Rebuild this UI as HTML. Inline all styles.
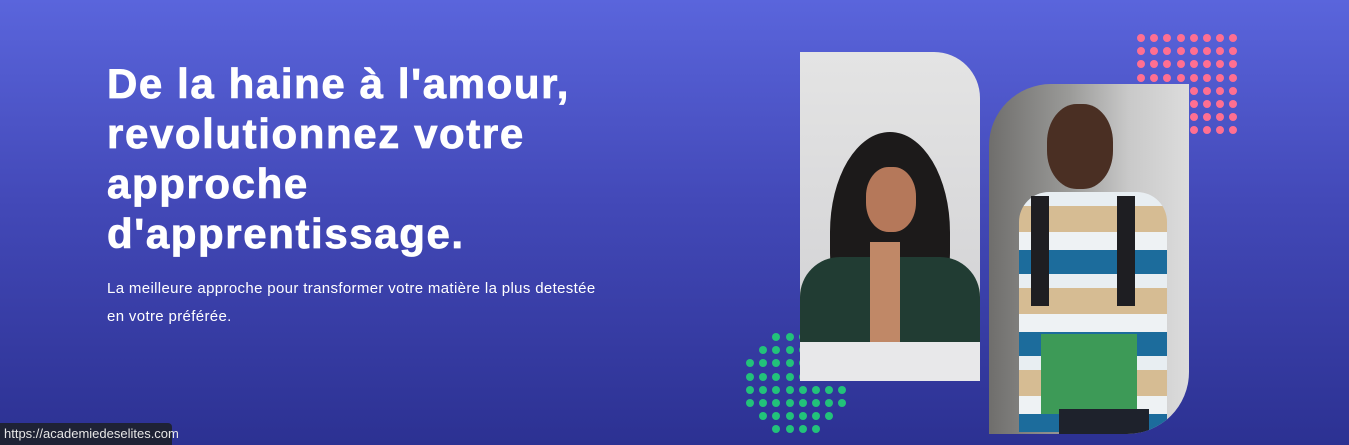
<!DOCTYPE html>
<html><head><meta charset="utf-8"><style>
*{margin:0;padding:0;box-sizing:border-box}
body{width:1349px;height:445px;overflow:hidden;background:linear-gradient(180deg,#5a65dc 0%,#4349b8 45%,#2c3192 100%);font-family:"Liberation Sans",sans-serif;position:relative}
h1{position:absolute;left:107px;top:59px;color:#fff;font-size:42px;font-weight:bold;line-height:50px;letter-spacing:1.6px;-webkit-text-stroke:0.8px #fff}
p{position:absolute;left:107px;top:275px;color:#fff;font-size:15px;line-height:28px;letter-spacing:0.35px}
.dot{position:absolute;width:8px;height:8px;border-radius:50%}
.ph{position:absolute;overflow:hidden}
.status{position:absolute;left:0;top:423px;width:172px;height:22px;background:#1e2235;color:#e6e6e6;font-size:13px;line-height:22px;padding-left:4px;border-top-right-radius:4px}
</style></head><body>
<h1>De la haine à l'amour,<br>revolutionnez votre<br>approche<br>d'apprentissage.</h1>
<p>La meilleure approche pour transformer votre matière la plus detestée<br>en votre préférée.</p>
<div id="dots"></div>
<div class="ph" style="left:800px;top:52px;width:180px;height:329px;border-top-right-radius:46px;background:linear-gradient(180deg,#e4e4e4,#cfcfd2)">
 <div style="position:absolute;left:30px;top:80px;width:120px;height:200px;border-radius:50% 50% 40% 40%;background:#1c1a1a"></div>
 <div style="position:absolute;left:66px;top:115px;width:50px;height:65px;border-radius:45%;background:#b5785a"></div>
 <div style="position:absolute;left:0;top:205px;width:180px;height:130px;border-radius:40px 40px 0 0;background:#213c33"></div>
 <div style="position:absolute;left:70px;top:190px;width:30px;height:100px;background:#c08867"></div>
 <div style="position:absolute;left:0;top:290px;width:180px;height:40px;background:#e8e8ea"></div>
</div>
<div class="ph" style="left:989px;top:84px;width:200px;height:350px;border-top-left-radius:62px;border-bottom-right-radius:62px;background:linear-gradient(90deg,#6f6e6c,#9a9a98 40%,#c9c9c9 70%,#dcdcdc)">
 <div style="position:absolute;left:58px;top:20px;width:66px;height:85px;border-radius:45%;background:#4a2f23"></div>
 <div style="position:absolute;left:30px;top:108px;width:148px;height:240px;border-radius:30px 30px 0 0;background:repeating-linear-gradient(180deg,#e8eef2 0,#e8eef2 14px,#d6bc93 14px,#d6bc93 40px,#eef2f4 40px,#eef2f4 58px,#1c6c9c 58px,#1c6c9c 82px)"></div>
 <div style="position:absolute;left:42px;top:112px;width:18px;height:110px;background:#1e1e22"></div>
 <div style="position:absolute;left:128px;top:112px;width:18px;height:110px;background:#1e1e22"></div>
 <div style="position:absolute;left:52px;top:250px;width:96px;height:80px;background:#3d9a57"></div>
 <div style="position:absolute;left:70px;top:325px;width:90px;height:25px;background:#1e222c"></div>
</div>
<div class="status">https://academiedeselites.com</div>
<script>
var h='';
for(var r=0;r<8;r++)for(var c=0;c<8;c++){h+='<div class="dot" style="background:#ff6f91;left:'+(1137+c*13.2)+'px;top:'+(34+r*13.2)+'px"></div>';}
for(var r=0;r<8;r++)for(var c=0;c<8;c++){var dx=c-3.5,dy=r-3.5;if(dx*dx+dy*dy<=17.5)h+='<div class="dot" style="background:#22c27a;left:'+(746+c*13.2)+'px;top:'+(333+r*13.2)+'px"></div>';}
document.getElementById('dots').innerHTML=h;
</script>
</body></html>
